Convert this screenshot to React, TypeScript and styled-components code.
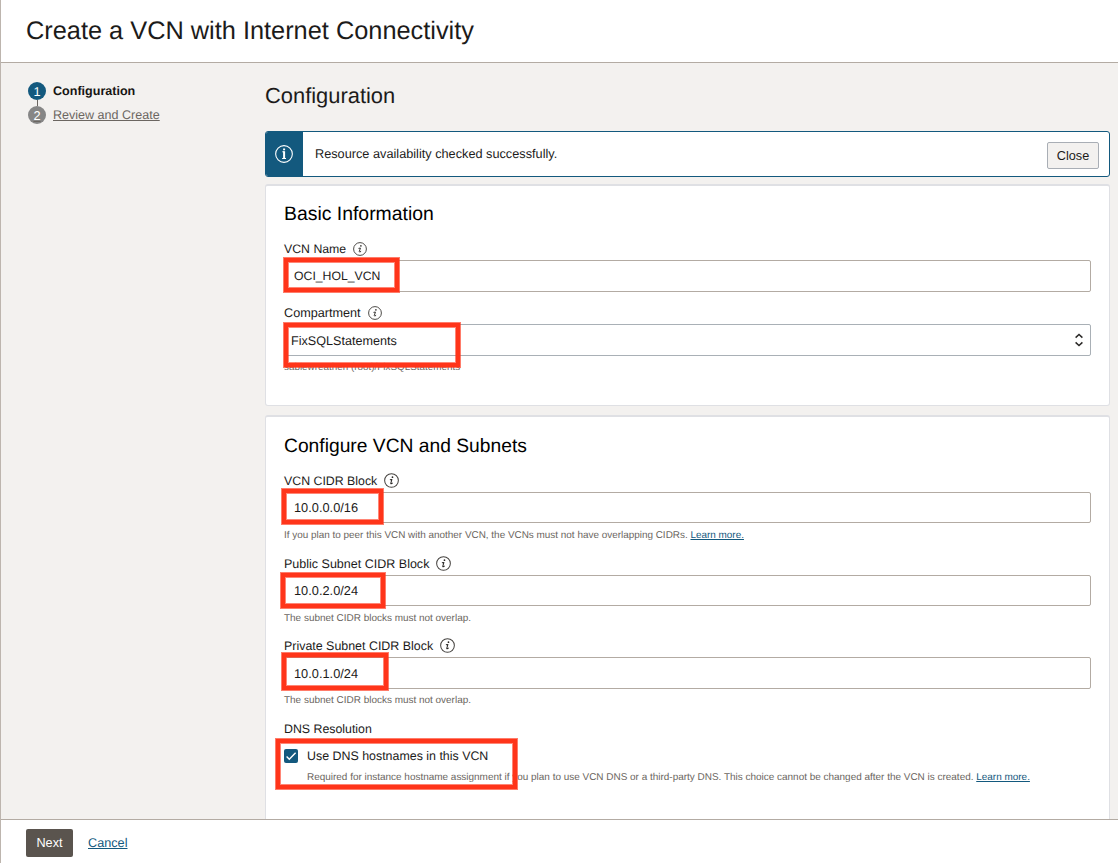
import React from "react";
import styled, { createGlobalStyle } from "styled-components";

const GlobalStyle = createGlobalStyle`
  *, *::before, *::after { box-sizing: border-box; }
  body {
    margin: 0;
    font-family: "Liberation Sans", Arial, sans-serif;
    color: #1c1b1a;
    text-rendering: geometricPrecision;
  }
`;

const Page = styled.div`
  width: 1118px;
  height: 863px;
  display: flex;
  flex-direction: column;
  overflow: hidden;
  background: #fff;
  border-left: 1px solid #bdb5ae;
`;

const Header = styled.header`
  height: 63px;
  flex: none;
  padding: 16px 0 0 25px;
  border-bottom: 1px solid #b3aba3;
`;

const Title = styled.h1`
  margin: 0;
  font-size: 25.35px;
  line-height: 30px;
  font-weight: 400;
`;

const Body = styled.div`
  flex: 1;
  min-height: 0;
  display: flex;
  overflow: hidden;
  background: #f3f1ef;
`;

const Steps = styled.ol`
  width: 264px;
  flex: none;
  margin: 0;
  padding: 19px 0 0 27px;
  list-style: none;
`;

const Step = styled.li<{ $active?: boolean }>`
  display: flex;
  align-items: center;
  gap: 7px;
  height: 18px;
  margin-bottom: 6px;
  font-size: 12.55px;
  font-weight: ${(p) => (p.$active ? 700 : 400)};
  color: ${(p) => (p.$active ? "#161513" : "#6b6661")};
  text-decoration: ${(p) => (p.$active ? "none" : "underline")};
`;

const StepNumber = styled.span<{ $active?: boolean }>`
  position: relative;
  display: inline-flex;
  align-items: center;
  justify-content: center;
  width: 18px;
  height: 18px;
  border-radius: 50%;
  background: ${(p) => (p.$active ? "#13597e" : "#868686")};
  color: #fff;
  font-weight: 400;
  font-size: 12.8px;
  &::after {
    content: "";
    display: ${(p) => (p.$active ? "block" : "none")};
    position: absolute;
    left: 9px;
    top: 18px;
    width: 1px;
    height: 6px;
    background: #6b6661;
  }
`;

const Main = styled.main`
  width: 845px;
  flex: none;
`;

const Heading = styled.h2`
  margin: 0;
  height: 68px;
  padding-top: 20px;
  font-size: 21.9px;
  line-height: 26px;
  font-weight: 400;
`;

const Alert = styled.div`
  display: flex;
  height: 46px;
  border: 1px solid #13597e;
  border-radius: 3px;
  background: #fff;
  overflow: hidden;
  margin-bottom: 7px;
`;

const AlertIcon = styled.div`
  width: 37px;
  display: flex;
  align-items: center;
  padding-left: 9px;
  background: #13597e;
`;

const AlertText = styled.p`
  flex: 1;
  margin: 0;
  padding: 14px 0 0 12px;
  font-size: 12.72px;
  line-height: 16px;
`;

const CloseButton = styled.button`
  width: 52px;
  height: 27px;
  margin: 10px 10px 0 0;
  padding: 1px 0 0;
  border: 1px solid #a9aeb5;
  border-radius: 2px;
  background: #f3f1ef;
  font: inherit;
  font-size: 12.7px;
  color: inherit;
`;

const Card = styled.section<{ $height: number }>`
  height: ${(p) => p.$height}px;
  padding: 17px 18px 0;
  margin-bottom: 9px;
  border: 1px solid #dfe0e4;
  border-top-width: 2px;
  border-radius: 3px;
  background: #fff;
`;

const CardTitle = styled.h3<{ $lower?: boolean }>`
  margin: ${(p) => (p.$lower ? "1px 0 10px" : "-1px 0 11px")};
  font-size: ${(p) => (p.$lower ? 19.25 : 19.4)}px;
  line-height: 24px;
  font-weight: 400;
  color: #000;
`;

const Field = styled.div<{ $height: number }>`
  position: relative;
  height: ${(p) => p.$height}px;
`;

const Label = styled.div<{ $size?: number }>`
  display: flex;
  align-items: center;
  gap: 7px;
  height: 23px;
  font-size: ${(p) => p.$size ?? 12.43}px;
  line-height: 16px;
`;

const Control = styled.div<{ $height: number; $select?: boolean; $size?: number; $drop?: number }>`
  display: flex;
  align-items: center;
  justify-content: space-between;
  height: ${(p) => p.$height}px;
  padding: ${(p) => p.$drop ?? 0}px 6px 0 ${(p) => (p.$select ? 6 : 9)}px;
  border: 1px solid ${(p) => (p.$select ? "#a9b0b6" : "#b3aba3")};
  border-radius: 2px;
  font-size: ${(p) => p.$size ?? 12.8}px;
  line-height: 16px;
`;

const SelectValue = styled.span`
  padding-top: 2px;
`;

const Hint = styled.p<{ $top?: number; $size?: number }>`
  margin: 0;
  padding-top: ${(p) => p.$top ?? 6}px;
  font-size: ${(p) => p.$size ?? 9.94}px;
  line-height: 14px;
  color: #6b6661;
  white-space: nowrap;
`;

const Link = styled.a`
  color: #13597e;
  text-decoration: underline;
`;

const CheckRow = styled.div`
  display: flex;
  gap: 9px;
  padding-top: 9px;
`;

const Checkbox = styled.span`
  display: inline-flex;
  align-items: center;
  justify-content: center;
  width: 14px;
  height: 14px;
  border-radius: 2px;
  background: #13597e;
`;

const CheckLabel = styled.div`
  font-size: 12.41px;
  line-height: 14px;
`;

const Highlight = styled.div<{ $x: number; $y: number; $w: number; $h: number }>`
  position: absolute;
  left: ${(p) => p.$x + 1}px;
  top: ${(p) => p.$y + 1}px;
  width: ${(p) => p.$w - 2}px;
  height: ${(p) => p.$h - 2}px;
  border: 4px solid #ff351a;
  box-shadow: 0 0 0 1px rgba(255, 53, 26, 0.65), inset 0 0 0 1px rgba(255, 53, 26, 0.6);
  pointer-events: none;
`;

const Footer = styled.footer`
  height: 44px;
  flex: none;
  display: flex;
  align-items: flex-start;
  padding: 9px 0 0 25px;
  gap: 15px;
  border-top: 1px solid #b3aba3;
  font-size: 12.7px;
`;

const NextButton = styled.button`
  width: 47px;
  height: 28px;
  padding: 0;
  border: 0;
  border-radius: 2px;
  background: #5a544e;
  color: #fff;
  font: inherit;
`;

const CancelLink = styled(Link)`
  line-height: 28px;
`;

function InfoIcon({ size = 14 }: { size?: number }) {
  return (
    <svg width={size} height={size} viewBox="0 0 14 14">
      <circle cx="7" cy="7" r="6.4" fill="none" stroke="#45423f" strokeWidth="0.95" />
      <circle cx="7.9" cy="3.9" r="0.8" fill="#2a2826" />
      <path
        d="M5.5 6.4L7.4 6L6.3 9.6Q6.2 10.7 8.1 9.3"
        fill="none"
        stroke="#2a2826"
        strokeWidth="0.95"
        strokeLinejoin="round"
      />
    </svg>
  );
}

function AlertInfoIcon() {
  return (
    <svg width="18" height="18" viewBox="0 0 18 18" fill="none" stroke="#fff">
      <circle cx="9" cy="9" r="8.35" strokeWidth="1.1" />
      <path d="M7.3 6.8H9.2M7.1 13.5H11" strokeWidth="1" />
      <path d="M9.1 6.3V14" strokeWidth="2" />
      <path d="M8.1 4.3H10.1" strokeWidth="1.8" />
    </svg>
  );
}

function SelectArrows() {
  return (
    <svg width="10" height="14" viewBox="0 0 10 14" fill="none" stroke="#2a2826" strokeWidth="1.5">
      <path d="M1.6 4.6L5 1.5L8.4 4.6M1.6 9.4L5 12.5L8.4 9.4" />
    </svg>
  );
}

export default function App() {
  return (
    <Page>
      <GlobalStyle />
      <Header>
        <Title>Create a VCN with Internet Connectivity</Title>
      </Header>
      <Body>
        <Steps>
          <Step $active>
            <StepNumber $active>1</StepNumber>Configuration
          </Step>
          <Step>
            <StepNumber>2</StepNumber>
            <span>Review and Create</span>
          </Step>
        </Steps>
        <Main>
          <Heading>Configuration</Heading>
          <Alert>
            <AlertIcon>
              <AlertInfoIcon />
            </AlertIcon>
            <AlertText>Resource availability checked successfully.</AlertText>
            <CloseButton>Close</CloseButton>
          </Alert>
          <Card $height={222}>
            <CardTitle>Basic Information</CardTitle>
            <Field $height={64}>
              <Label $size={12.3}>VCN Name <InfoIcon /></Label>
              <Control $height={32} $size={12.25}>OCI_HOL_VCN</Control>
              <Highlight $x={-1} $y={20} $w={117} $h={36} />
            </Field>
            <Field $height={64}>
              <Label $size={12.65}>Compartment <InfoIcon /></Label>
              <Control $height={32} $size={12.6} $select>
                <SelectValue>FixSQLStatements</SelectValue> <SelectArrows />
              </Control>
              <Hint $top={5} $size={9.9}>sablewreathen (root)/FixSQLStatements</Hint>
              <Highlight $x={-1} $y={21} $w={178} $h={46} />
            </Field>
          </Card>
          <Card $height={420}>
            <CardTitle $lower>Configure VCN and Subnets</CardTitle>
            <Field $height={83}>
              <Label $size={12.35}>VCN CIDR Block <InfoIcon size={15} /></Label>
              <Control $height={31}>10.0.0.0/16</Control>
              <Hint>
                If you plan to peer this VCN with another VCN, the VCNs must not have overlapping CIDRs.{" "}
                <Link>Learn more.</Link>
              </Hint>
              <Highlight $x={-3} $y={19} $w={103} $h={37} />
            </Field>
            <Field $height={82}>
              <Label $size={12.53}>Public Subnet CIDR Block <InfoIcon size={15} /></Label>
              <Control $height={31}>10.0.2.0/24</Control>
              <Hint $size={9.96}>The subnet CIDR blocks must not overlap.</Hint>
              <Highlight $x={-4} $y={20} $w={106} $h={37} />
            </Field>
            <Field $height={83}>
              <Label>Private Subnet CIDR Block <InfoIcon size={15} /></Label>
              <Control $height={32} $drop={1}>10.0.1.0/24</Control>
              <Hint $top={5} $size={9.96}>The subnet CIDR blocks must not overlap.</Hint>
              <Highlight $x={-3} $y={18} $w={108} $h={39} />
            </Field>
            <Field $height={70}>
              <Label $size={12.35}>DNS Resolution</Label>
              <CheckRow>
                <Checkbox>
                  <svg width="12" height="12" viewBox="0 0 12 12" fill="none" stroke="#fff" strokeWidth="1.4">
                    <path d="M1.6 6.6L4.3 9.2L10.6 2.8" />
                  </svg>
                </Checkbox>
                <div>
                  <CheckLabel>Use DNS hostnames in this VCN</CheckLabel>
                  <Hint $top={8} $size={9.96}>
                    Required for instance hostname assignment if you plan to use VCN DNS or a third-party DNS. This
                    choice cannot be changed after the VCN is created. <Link>Learn more.</Link>
                  </Hint>
                </div>
              </CheckRow>
              <Highlight $x={-9} $y={21} $w={243} $h={52} />
            </Field>
          </Card>
        </Main>
      </Body>
      <Footer>
        <NextButton>Next</NextButton>
        <CancelLink>Cancel</CancelLink>
      </Footer>
    </Page>
  );
}
